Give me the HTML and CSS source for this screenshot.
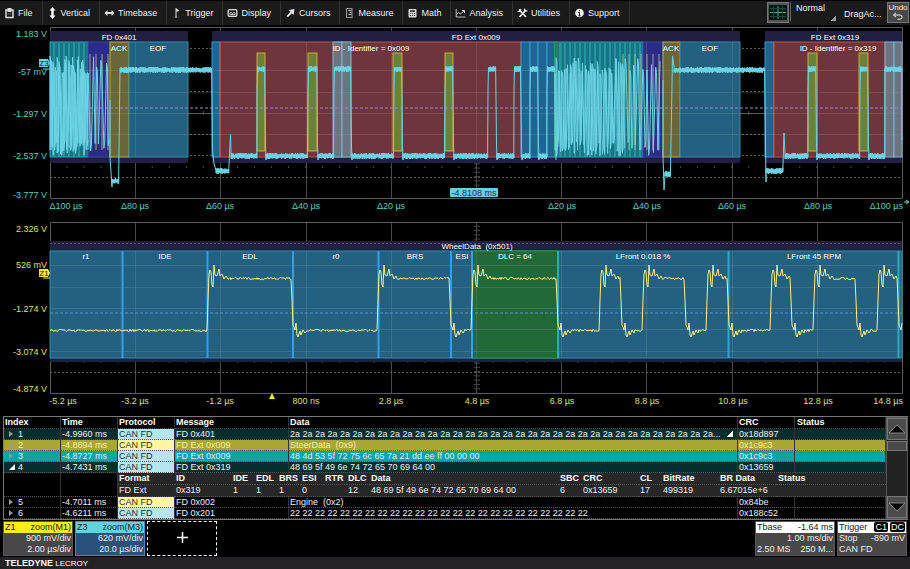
FILE: index.html
```html
<!DOCTYPE html>
<html lang="en">
<head>
	<meta charset="utf-8">
	<title>Oscilloscope</title>
	<link rel="stylesheet" href="styles.css">
</head>
<body>
	<nav class="menu">
		<button class="item"><svg class="ico" viewBox="0 0 10 12"><path d="M1.500 3h7v7.500h-7z" fill="none" stroke="#ddd" stroke-width="1.500"/><path d="M3 1h4v4H3z" fill="#ddd"/><path d="M3 7h4" stroke="#777"/></svg>File</button>
		<button class="item"><svg class="ico" viewBox="0 0 10 12"><path d="M5 0l3 3.500H6.200v5H8L5 12 2 8.500h1.800v-5H2z" fill="#fff"/></svg>Vertical</button>
		<button class="item"><svg class="ico" viewBox="0 0 10 12"><path d="M0 6l3-3v2h4V3l3 3-3 3V7H3v2z" fill="#ddd"/></svg>Timebase</button>
		<button class="item"><svg class="ico" viewBox="0 0 10 12"><path d="M4.500 11V1.500" stroke="#ddd" fill="none"/><path d="M4 1l4 2.500L5 5z" fill="#ddd"/></svg>Trigger</button>
		<button class="item"><svg class="ico" viewBox="0 0 10 12"><rect x=".7" y="2.700" width="8.600" height="6.600" rx="1" fill="none" stroke="#ddd" stroke-width="1.300"/><path d="M2 6.500l1.500-1 1.500 1 1.500-1 1.500 1M2 7.700h6" stroke="#ddd" fill="none"/></svg>Display</button>
		<button class="item"><svg class="ico" viewBox="0 0 10 12"><path d="M9 2L3 3l2 1.800L1 9.200 2.500 10l4-3.700L8 8z" fill="#eee"/></svg>Cursors</button>
		<button class="item"><svg class="ico" viewBox="0 0 10 12"><rect x="2" y="1.500" width="5.500" height="9" fill="none" stroke="#999"/><path d="M4 3.500h3M5 5.500h2M4 7.500h3" stroke="#ccc"/></svg>Measure</button>
		<button class="item"><svg class="ico" viewBox="0 0 10 12"><rect x="1" y="2" width="8" height="8.500" rx="1" fill="#ddd"/><path d="M2.500 4h5" stroke="#222" stroke-width="1.500"/><path d="M2.500 6.500h5M2.500 8.500h5" stroke="#222" stroke-dasharray="1 1"/></svg>Math</button>
		<button class="item"><svg class="ico" viewBox="0 0 10 12"><path d="M.7 2v8H10" fill="none" stroke="#bbb"/><path d="M1 7.500l2-2 2 1.500 3.500-3M6.500 3.500H9v2.500" fill="none" stroke="#ddd"/></svg>Analysis</button>
		<button class="item"><svg class="ico" viewBox="0 0 10 12"><path d="M1.500 2.500l7 7.500M8.500 3L2 10" stroke="#eee" stroke-width="1.700"/><path d="M0 4.500h2.500L3.500 2M7 1.500v2.500h3" stroke="#eee" fill="none" stroke-width="1.200"/></svg>Utilities</button>
		<button class="item"><svg class="ico" viewBox="0 0 10 12"><circle cx="5" cy="6" r="4.300" fill="#eee"/><path d="M5 3v1.300M5 5.300V9M3.800 5.500H5M3.800 8.800h2.400" stroke="#222"/></svg>Support</button>
		<div class="tools">
			<button class="gridbtn" aria-label="Grid"><svg width="18" height="15" viewBox="0 0 18 15"><rect width="18" height="15" fill="#061513"/><path d="M9 1v13M1 7.500h16" stroke="#4aa58e"/><path d="M1 3.500h16M1 11.500h16M4.500 1v13M13.500 1v13" stroke="#17473d"/></svg></button>
			<button class="mode">Normal</button>
			<button class="drag">DragAc...</button>
			<button class="undo">Undo<svg width="12" height="8" viewBox="0 0 12 8"><path d="M1.500 3H8a2 2 0 0 1 0 4.200H5.500M4 .8L1.500 3 4 5.200" fill="none" stroke="#eee"/></svg></button>
		</div>
	</nav>

	<main>
	<svg class="plot" viewBox="0 26 910 188">
		<g id="grid1"></g>
		<!-- message frames -->
		<g class="frame">
			<rect x="50" y="31" width="138" height="132"/>
			<rect x="212" y="31" width="528" height="132"/>
			<rect x="765" y="31" width="137" height="132"/>
		</g>
		<g class="field">
			<rect class="teal" x="50" y="42" width="38" height="115"/>
			<rect class="indigo" x="88" y="42" width="22" height="115"/>
			<rect class="olive" x="110" y="42" width="19" height="115"/>
			<rect class="blue" x="129" y="42" width="59" height="115"/>
			<rect class="bright" x="212" y="42" width="8" height="115"/>
			<rect class="red" x="220" y="42" width="301" height="115"/>
			<rect class="gray" x="333" y="42" width="9" height="115"/>
			<rect class="gray" x="342" y="42" width="9" height="115"/>
			<rect class="bright" x="521" y="42" width="9" height="115"/>
			<rect class="bright" x="530" y="42" width="8" height="115"/>
			<rect class="bright" x="538" y="42" width="9" height="115"/>
			<rect class="bright" x="547" y="42" width="8" height="115"/>
			<rect class="teal" x="555" y="42" width="88" height="115"/>
			<rect class="green" x="555" y="42" width="2" height="115"/>
			<rect class="indigo" x="643" y="42" width="20" height="115"/>
			<rect class="olive" x="663" y="42" width="17" height="115"/>
			<rect class="blue" x="680" y="42" width="60" height="115"/>
			<rect class="bright" x="765" y="42" width="9" height="115"/>
			<rect class="red" x="774" y="42" width="111" height="115"/>
			<rect class="gray" x="885" y="42" width="9" height="115"/>
			<rect class="gray" x="894" y="42" width="8" height="115"/>
		</g>
		<g id="bits1"></g>
		<g class="stuff">
			<rect x="257" y="53" width="8" height="98"/>
			<rect x="308" y="53" width="9" height="98"/>
			<rect x="393" y="53" width="9" height="98"/>
			<rect x="445" y="53" width="8" height="98"/>
			<rect x="808" y="53" width="9" height="98"/>
			<rect x="859" y="53" width="9" height="98"/>
		</g>
		<path class="level" d="M50 108H902"/>
		<path id="trace1" class="trace cyan"/>
		<g class="lbl">
			<text x="119" y="40">FD 0x401</text>
			<text x="119" y="51">ACK</text>
			<text x="158" y="51">EOF</text>
			<text x="476" y="40">FD Ext 0x009</text>
			<text x="371" y="51">ID - Identifier = 0x009</text>
			<text x="671" y="51">ACK</text>
			<text x="710" y="51">EOF</text>
			<text x="835" y="40">FD Ext 0x319</text>
			<text x="838" y="51">ID - Identifier = 0x319</text>
		</g>
		<g class="axis cy end">
			<text x="47" y="37">1.183 V</text>
			<text x="47" y="75">-57 mV</text>
			<text x="47" y="117">-1.297 V</text>
			<text x="47" y="159">-2.537 V</text>
			<text x="47" y="198">-3.777 V</text>
			<text x="903" y="209">Δ100 µs</text>
		</g>
		<g class="axis cy mid">
			<text x="66" y="209">Δ100 µs</text>
			<text x="135" y="209">Δ80 µs</text>
			<text x="220" y="209">Δ60 µs</text>
			<text x="306" y="209">Δ40 µs</text>
			<text x="391" y="209">Δ20 µs</text>
			<text x="562" y="209">Δ20 µs</text>
			<text x="647" y="209">Δ40 µs</text>
			<text x="732" y="209">Δ60 µs</text>
			<text x="818" y="209">Δ80 µs</text>
		</g>
		<path d="M904 202h5M906 200l3 2-3 2" fill="none" stroke="#6fe0c0"/>
		<rect x="450" y="188" width="48" height="9" rx="1" fill="#67cfe0"/>
		<text class="pill" x="474" y="196">-4.8108 ms</text>
		<path d="M39 59h9l2 4-2 4h-9z" fill="#67cfe0"/>
		<path d="M43 69h7" stroke="#67cfe0"/>
		<text class="tag" x="44" y="66">Z3</text>
	</svg>

	<svg class="plot" viewBox="0 214 910 198">
		<g id="grid2"></g>
		<g class="frame"><rect x="50" y="241" width="852" height="121"/></g>
		<g class="field">
			<rect class="blue" x="50" y="251" width="852" height="107"/>
			<rect class="green" x="472" y="251" width="86" height="107"/>
		</g>
		<g id="faint2"></g>
		<path class="dots" d="M50 243.500H902"/>
		<path class="edge" d="M122.500 251V358M207.500 251V358M293 251V358M378.500 251V358M451 251V358M472 251V358"/>
		<path class="edge teal-edge" d="M558 251V358M728.500 251V358M898.500 251V358"/>
		<path class="level low" d="M50 313H902"/>
		<path id="trace2" class="trace yellow"/>
		<g class="lbl">
			<text x="477" y="249">WheelData&#160; (0x501)</text>
			<text x="86" y="259">r1</text>
			<text x="165" y="259">IDE</text>
			<text x="250" y="259">EDL</text>
			<text x="336" y="259">r0</text>
			<text x="415" y="259">BRS</text>
			<text x="462" y="259">ESI</text>
			<text x="515" y="259">DLC = 64</text>
			<text x="643" y="259">LFront 0.018 %</text>
			<text x="814" y="259">LFront 45 RPM</text>
		</g>
		<g class="axis ye end">
			<text x="47" y="232">2.326 V</text>
			<text x="47" y="268">526 mV</text>
			<text x="47" y="312">-1.274 V</text>
			<text x="47" y="355">-3.074 V</text>
			<text x="47" y="392">-4.874 V</text>
			<text x="903" y="404">14.8 µs</text>
		</g>
		<g class="axis ye mid">
			<text x="63" y="404">-5.2 µs</text>
			<text x="135" y="404">-3.2 µs</text>
			<text x="220" y="404">-1.2 µs</text>
			<text x="306" y="404">800 ns</text>
			<text x="391" y="404">2.8 µs</text>
			<text x="477" y="404">4.8 µs</text>
			<text x="562" y="404">6.8 µs</text>
			<text x="647" y="404">8.8 µs</text>
			<text x="733" y="404">10.8 µs</text>
			<text x="818" y="404">12.8 µs</text>
		</g>
		<path d="M269 399l3-6 3 6z" fill="#f4ec1c"/>
		<path d="M39 269h9l2 4-2 4h-9z" fill="#f4ec1c"/>
		<path d="M43 278h7" stroke="#f4ec1c"/>
		<text class="tag" x="44" y="276">Z1</text>
	</svg>

	<section class="decode">
		<table class="list">
			<colgroup><col class="c-idx"><col class="c-mid"><col class="c-mid"><col class="c-msg"><col><col class="c-crc"><col class="c-stat"></colgroup>
			<thead>
				<tr><th>Index</th><th>Time</th><th>Protocol</th><th>Message</th><th>Data</th><th>CRC</th><th>Status</th></tr>
			</thead>
			<tbody>
				<tr class="dark"><td><button class="tri" aria-label="Expand"></button>1</td><td>-4.9960 ms</td><td class="p-blue">CAN FD</td><td>FD 0x401</td><td class="more">2a 2a 2a 2a 2a 2a 2a 2a 2a 2a 2a 2a 2a 2a 2a 2a 2a 2a 2a 2a 2a 2a 2a 2a 2a 2a 2a 2a 2a 2a 2a 2a 2a 2a...</td><td>0x18d897</td><td></td></tr>
				<tr class="gold"><td><button class="tri" aria-label="Expand"></button>2</td><td>-4.8894 ms</td><td class="p-yellow">CAN FD</td><td>FD Ext 0x009</td><td>SteerData&nbsp; (0x9)</td><td>0x1c9c3</td><td></td></tr>
				<tr class="aqua"><td><button class="tri" aria-label="Expand"></button>3</td><td>-4.8727 ms</td><td class="p-blue">CAN FD</td><td>FD Ext 0x009</td><td>48 4d 53 5f 72 75 6c 65 7a 21 dd ee ff 00 00 00</td><td>0x1c9c3</td><td></td></tr>
				<tr class="dark"><td><button class="tri open" aria-label="Collapse"></button>4</td><td>-4.7431 ms</td><td class="p-blue">CAN FD</td><td>FD Ext 0x319</td><td>48 69 5f 49 6e 74 72 65 70 69 64 00</td><td>0x13659</td><td></td></tr>
				<tr class="detail">
					<td></td><td></td>
					<td class="nest" colspan="5">
						<table class="sub">
							<colgroup><col class="s-57"><col class="s-57"><col class="s-23"><col class="s-23"><col class="s-23"><col class="s-23"><col class="s-23"><col class="s-23"><col><col class="s-23"><col class="s-57"><col class="s-23"><col class="s-57"><col class="s-57"><col class="s-stat"></colgroup>
							<tr><th>Format</th><th>ID</th><th>IDE</th><th>EDL</th><th>BRS</th><th>ESI</th><th>RTR</th><th>DLC</th><th>Data</th><th>SBC</th><th>CRC</th><th>CL</th><th>BitRate</th><th>BR Data</th><th>Status</th></tr>
							<tr><td>FD Ext</td><td>0x319</td><td>1</td><td>1</td><td>1</td><td>0</td><td></td><td>12</td><td>48 69 5f 49 6e 74 72 65 70 69 64 00</td><td>6</td><td>0x13659</td><td>17</td><td>499319</td><td>6.67015e+6</td><td></td></tr>
						</table>
					</td>
				</tr>
				<tr><td><button class="tri" aria-label="Expand"></button>5</td><td>-4.7011 ms</td><td class="p-yellow">CAN FD</td><td>FD 0x002</td><td>Engine&nbsp; (0x2)</td><td>0x84be</td><td></td></tr>
				<tr><td><button class="tri" aria-label="Expand"></button>6</td><td>-4.6211 ms</td><td class="p-blue">CAN FD</td><td>FD 0x201</td><td>22 22 22 22 22 22 22 22 22 22 22 22 22 22 22 22 22 22 22 22 22 22 22 22</td><td>0x188c52</td><td></td></tr>
			</tbody>
		</table>
		<div class="scroll">
			<button aria-label="Up"><svg width="18" height="10" viewBox="0 0 18 10"><path d="M1 9l8-8 8 8z" fill="#000" stroke="#888"/></svg></button>
			<div class="thumb"></div>
			<button class="down" aria-label="Down"><svg width="18" height="10" viewBox="0 0 18 10"><path d="M1 1l8 8 8-8z" fill="#000" stroke="#888"/></svg></button>
		</div>
	</section>

	<section class="boxes">
		<div class="box z1">
			<div class="head"><span>Z1</span><span>zoom(M1)</span></div>
			<p>900 mV/div</p>
			<p>2.00 µs/div</p>
		</div>
		<div class="box z3">
			<div class="head"><span>Z3</span><span>zoom(M3)</span></div>
			<p>620 mV/div</p>
			<p>20.0 µs/div</p>
		</div>
		<button class="add" aria-label="Add"><svg width="11" height="11" viewBox="0 0 11 11"><path d="M5.500 0v11M0 5.500h11" stroke="#fff" stroke-width="1.500"/></svg></button>
		<div class="box tbase">
			<div class="head"><span>Tbase</span><span>-1.64 ms</span></div>
			<p>1.00 ms/div</p>
			<p class="split"><span>2.50 MS</span><span>250 M...</span></p>
		</div>
		<div class="box trig">
			<div class="head"><span>Trigger</span><span class="chips"><b>C1</b><b>DC</b></span></div>
			<p class="split"><span>Stop</span><span>-890 mV</span></p>
			<p class="split"><span>CAN FD</span></p>
		</div>
	</section>
	</main>

	<footer class="brand"><strong>TELEDYNE</strong> LECROY</footer>
	<script src="scope.js"></script>
</body>
</html>
```
FILE: styles.css
```css
* {
	box-sizing: border-box;
}
body {
	margin: 0;
	background: #000;
	color: #eee;
	font-family: "Liberation Sans", Arial, sans-serif;
	font-size: 9px;
	min-height: 100vh;
	display: flex;
	flex-direction: column;
}
main {
	flex: 1;
}
button {
	font: inherit;
	color: inherit;
	background: none;
	border: none;
	padding: 0;
	margin: 0;
}

/* menu bar */
.menu {
	display: flex;
	align-items: stretch;
	height: 26px;
	background: #191a19;
	border-top: 1px solid #000;
	border-bottom: 1px solid #000;
}
.item {
	display: flex;
	align-items: center;
	padding: 0 9px 0 4px;
	border-right: 1px solid #333;
}
.ico {
	width: 11px;
	height: 12px;
	margin-right: 3px;
}
.tools {
	display: flex;
	align-items: flex-start;
	margin-left: auto;
	padding: 1px 1px 0 0;
}
.gridbtn {
	height: 21px;
	width: 22px;
	background: #555;
	border: 1px solid #777;
	display: flex;
	align-items: center;
	justify-content: center;
}
.mode {
	width: 46px;
	height: 19px;
	padding: 0 0 7px 5px;
	text-align: left;
	border-left: 1px solid #666;
	margin-left: 1px;
	background: linear-gradient(135deg, transparent 50%, #999 50%) right bottom / 6px 5px no-repeat;
}
.drag {
	height: 24px;
	width: 51px;
	padding-left: 8px;
	text-align: left;
}
.undo {
	height: 21px;
	width: 22px;
	background: #484848;
	border: 1px solid #777;
	font-size: 8px;
	line-height: 9px;
	display: flex;
	flex-direction: column;
	align-items: center;
}

/* plots */
.plot {
	display: block;
	width: 100%;
}
.box-line {
	fill: none;
	stroke: #5a5a5a;
}
.solid {
	fill: none;
	stroke: #484848;
}
.dots {
	fill: none;
	stroke: #5c5c5c;
	stroke-dasharray: 2 2;
}
.faint {
	fill: none;
	stroke: #aaa;
	stroke-opacity: 0.2;
}
.frame rect {
	fill: #211f42;
}
.field rect {
	stroke-width: 1;
}
.teal {
	fill: #167585;
	stroke: #2a9db0;
}
.indigo {
	fill: #2b2b88;
	stroke: #3c48a8;
}
.olive {
	fill: #6b6637;
	stroke: #b5ad55;
}
.blue {
	fill: #246080;
	stroke: #2c8fa8;
}
.bright {
	fill: #1e6590;
	stroke: #3a9ad8;
}
.red {
	fill: #6f353d;
	stroke: #c8503e;
}
.gray {
	fill: #6c7480;
	stroke: #85b2d5;
}
.green {
	fill: #22693a;
	stroke: #20a050;
}
.bits {
	fill: none;
	stroke: #3cc0c8;
	stroke-opacity: 0.8;
}
.bits.warm {
	stroke: #c0c878;
}
.stuff rect {
	fill: #6a8138;
	stroke: #d8a830;
}
.edge {
	stroke: #2da0f0;
	stroke-width: 2;
}
.teal-edge {
	stroke: #2aaac8;
}
.level {
	stroke: #9a86d8;
	stroke-dasharray: 3 2;
}
.level.low {
	stroke: #5a96d0;
}
.trace {
	fill: none;
}
.cyan {
	stroke: #6cd3e4;
}
.yellow {
	stroke: #f6f08a;
}
.lbl {
	font-size: 8px;
	fill: #fff;
	text-anchor: middle;
}
.axis {
	font-size: 9px;
}
.cy {
	fill: #4fd0c4;
}
.ye {
	fill: #dfe05a;
}
.end {
	text-anchor: end;
}
.mid {
	text-anchor: middle;
}
.pill {
	font-size: 9px;
	fill: #103a48;
	text-anchor: middle;
}
.tag {
	font-size: 8px;
	fill: #222;
	text-anchor: middle;
}

/* decode table */
.decode {
	display: flex;
	margin: 4px 2px 0 3px;
	border-top: 1px solid #777;
	border-bottom: 1px solid #777;
}
table {
	border-collapse: separate;
	border-spacing: 0;
	table-layout: fixed;
	width: 100%;
}
.list {
	flex: 1;
	width: auto;
	border-left: 1px solid #777;
}
.c-idx, .c-mid, .c-crc {
	width: 57px;
}
.c-msg {
	width: 114px;
}
.c-stat {
	width: 91px;
}
th, td {
	height: 11px;
	line-height: 10px;
	padding: 0 0 0 1px;
	text-align: left;
	white-space: nowrap;
	overflow: hidden;
	border-bottom: 1px dotted #555;
	border-right: 1px solid #333;
}
th {
	height: 12px;
	line-height: 11px;
	color: #fff;
}
td:last-child, th:last-child {
	padding-left: 2px;
}
.dark td {
	background: #062e2f;
}
.gold td {
	background: #aaa634;
	color: #f2f0a0;
}
.aqua td {
	background: #00a5a8;
}
.list .p-blue {
	background: #b5e6ef;
	color: #14343c;
}
.list .p-yellow {
	background: #fcf6a2;
	color: #333010;
}
.more {
	background: linear-gradient(135deg, transparent 50%, #fff 50%) right 4px center / 7px 6px no-repeat #062e2f !important;
}
.tri {
	width: 0;
	height: 0;
	border: 3px solid transparent;
	border-left: 4px solid #999;
	border-right: 0;
	margin: 2px 5px 0 4px;
	vertical-align: top;
}
.tri.open {
	border: 3px solid #fff;
	border-left-color: transparent;
	border-top-color: transparent;
	margin: 2px 3px 0 4px;
}
.list td.nest {
	padding: 0;
	border: none;
	height: 24px;
}
.sub th, .sub td {
	background: #272727;
	height: 12px;
	line-height: 11px;
	border-right: none;
}
.s-57 {
	width: 57px;
}
.s-23 {
	width: 23px;
}
.s-stat {
	width: 110px;
}
.scroll {
	width: 22px;
	background: #222;
	border: 1px solid #555;
	display: flex;
	flex-direction: column;
}
.scroll button {
	height: 22px;
	background: #4c4c4c;
	border: 1px solid #777;
	display: flex;
	align-items: center;
	justify-content: center;
}
.thumb {
	height: 10px;
	margin-top: 1px;
	background: #484848;
	border: 1px solid #777;
}
.scroll .down {
	margin-top: auto;
}

/* descriptor boxes */
.boxes {
	display: flex;
	gap: 2px;
	padding: 1px 3px;
	height: 37px;
}
.box {
	width: 70px;
	background: #484848;
	border: 1px solid #555;
}
.head {
	display: flex;
	justify-content: space-between;
	height: 11px;
	line-height: 11px;
	padding: 0 1px;
	color: #222;
	background: #fff;
}
.box p {
	margin: 0;
	padding: 0 1px;
	line-height: 11px;
	text-align: right;
}
.box .split {
	display: flex;
	justify-content: space-between;
}
.z1 .head {
	background: #f8f015;
}
.z3 {
	background: #28527a;
	border-color: #3a8ec8;
}
.z3 .head {
	background: #67cfe0;
}
.add {
	width: 70px;
	border: 1px dashed #fff;
}
.tbase {
	width: 80px;
	margin-left: auto;
}
.chips {
	display: flex;
	gap: 2px;
}
.chips b {
	background: #000;
	color: #fff;
	font-weight: normal;
	border-radius: 2px;
	padding: 0 1px;
	height: 10px;
	line-height: 10px;
}
.brand {
	height: 12px;
	line-height: 12px;
	padding-left: 5px;
	background: #242224;
	color: #fff;
	font-size: 8px;
}
.brand strong {
	font-size: 9px;
}
```
FILE: scope.js
```js
var seed = 7;
function rnd() {
	seed = (seed * 16807) % 2147483647;
	return seed / 2147483647;
}

function add(id, cls, d) {
	var p = document.createElementNS("http://www.w3.org/2000/svg", "path");
	p.setAttribute("class", cls);
	p.setAttribute("d", d);
	document.getElementById(id).appendChild(p);
}

// graticule: 10 x 4 divisions, dotted half lines, ticks on the centre axes
function grid(id, top) {
	var h = 171, bottom = top + h, mid = top + 86;
	var v = "", dots = "", ticks = "";
	for (var i = 1; i < 10; i++) {
		var x = Math.round(50 + i * 85.2) + 0.5;
		v += "M" + x + " " + top + "V" + bottom;
	}
	for (i = 1; i < 8; i++) {
		if (i != 4) dots += "M50 " + (Math.round(top + i * h / 8) + 0.5) + "H902";
	}
	for (i = 1; i < 50; i++) {
		x = 50 + i * 17.04;
		ticks += "M" + x + " " + (mid - 2) + "v4M" + x + " " + (bottom - 32) + "v2";
	}
	for (i = 1; i < 40; i++) {
		ticks += "M474 " + (top + i * h / 40) + "h6";
	}
	add(id, "solid", v + "M50 " + (mid + 0.5) + "H902");
	add(id, "dots", dots);
	add(id, "solid", ticks);
	add(id, "box-line", "M50.5 " + (top + 0.5) + "H902.5V" + bottom + ".5H50.5z");
}
grid("grid1", 27);
grid("grid2", 222);

// graticule seen through the coloured fields
var f1 = "M50 70.500H902M50 92.500H902M50 113.500H902M50 134.500H902", f2 = "M50 265.500H902M50 287.500H902M50 308.500H902M50 329.500H902M50 351.500H902";
for (var i = 1; i < 10; i++) {
	var gx = Math.round(50 + i * 85.2) + 0.5;
	f1 += "M" + gx + " 42V157";
	f2 += "M" + gx + " 251V358";
}
add("bits1", "faint", f1);
add("faint2", "faint", f2);

// bit boundaries in the fast data phase
var b = "", w = "";
for (i = 0; i < 7; i++) b += "M" + (54 + i * 5) + " 43V157";
for (i = 0; i < 17; i++) b += "M" + (560 + i * 5) + " 43V157";
for (i = 0; i < 7; i++) w += "M" + (623 + i * 6) + " 54V150";
for (i = 0; i < 4; i++) w += "M" + (90 + i * 6) + " 54V150";
add("bits1", "bits", b);
add("bits1", "bits warm", w);

var d1 = "";
function flat(x0, x1, y) {
	for (var x = x0; x < x1; x += 0.6) {
		d1 += "L" + x.toFixed(1) + " " + (y - 1 - rnd() * 2).toFixed(1) + "V" + (y + 1 + rnd() * 2).toFixed(1);
	}
}
// fast bits: near vertical swings between the two levels
function burst(x0, x1, step) {
	var up = true;
	d1 += "M" + x0 + " 150";
	for (var x = x0; x < x1; x += step + rnd() * step) {
		var y = up ? 56 + rnd() * 18 : 142 + rnd() * 15;
		d1 += "L" + x.toFixed(1) + " " + y.toFixed(1);
		if (rnd() > 0.4) d1 += "l.8 " + (up ? 5 : -6);
		up = !up;
	}
}
burst(50, 88, 1);
burst(51, 88, 1);
burst(51, 88, 1.5);
burst(88, 110, 1.5);
d1 += "M110 100V157L112 187";
flat(112, 119, 181);
d1 += "L120 68";
flat(120.5, 212, 70);
d1 += "L212.5 150L214 164L216 170";
flat(216, 229, 171);
d1 += "L230.500 134L231 153";
var highs = [[257, 265], [308, 317], [334, 351], [394, 402], [445, 453], [488, 496], [514, 521], [530, 538], [547, 555]];
var at = 231;
highs.forEach(function (p) {
	flat(at, p[0], 156);
	d1 += "L" + p[0] + " 90";
	flat(p[0] + 0.5, p[1], 69);
	d1 += "L" + (p[1] + 0.5) + " 145L" + (p[1] + 1) + " 160";
	at = p[1] + 1;
});
burst(555, 625, 1.2);
burst(556, 600, 1);
burst(600, 663, 1.6);
d1 += "M663 80V157L664 190L665 176";
flat(665, 671, 174);
d1 += "L672.500 56L674 66";
flat(674, 765, 70);
d1 += "L766 182";
flat(766, 783, 171);
d1 += "L784 133L785 153";
at = 785;
[[808, 816], [860, 868]].forEach(function (p) {
	flat(at, p[0], 156);
	d1 += "L" + p[0] + " 90";
	flat(p[0] + 0.5, p[1], 69);
	d1 += "L" + (p[1] + 0.5) + " 145L" + (p[1] + 1) + " 160";
	at = p[1] + 1;
});
flat(at, 885, 156);
flat(885, 902, 69);
d1 += "V140";
document.getElementById("trace1").setAttribute("d", d1);

// lower trace: ringing after each edge, then settle
var ringUp = [[0, 300], [1, 274], [2, 270], [3, 272], [4, 285], [5, 287], [6, 265], [7, 275], [9, 276], [11, 269], [12, 276], [14, 274], [16, 279], [18, 276]];
var ringDown = [[0, 300], [1, 325], [3, 330], [4, 323], [5, 335], [6, 337], [8, 331], [9, 335], [11, 330], [13, 333]];
var edges = [50, 208, 292, 378, 450, 472, 557, 600, 621, 643, 685, 707, 728, 771, 791, 814, 856, 878, 898];
var d2 = "M50 330.5";
for (i = 0; i < edges.length; i++) {
	var end = i + 1 < edges.length ? edges[i + 1] : 903;
	var high = i % 2 == 1, x = edges[i];
	if (i > 0) {
		(high ? ringUp : ringDown).forEach(function (r) {
			if (edges[i] + r[0] < end) {
				x = edges[i] + r[0];
				d2 += "L" + x + " " + r[1];
			}
		});
	}
	for (x = x + 1; x < end; x++) {
		d2 += "L" + x + " " + ((high ? 278.5 : 330.5) + rnd() * 2.4 - 1.2).toFixed(1);
	}
}
document.getElementById("trace2").setAttribute("d", d2);
```
